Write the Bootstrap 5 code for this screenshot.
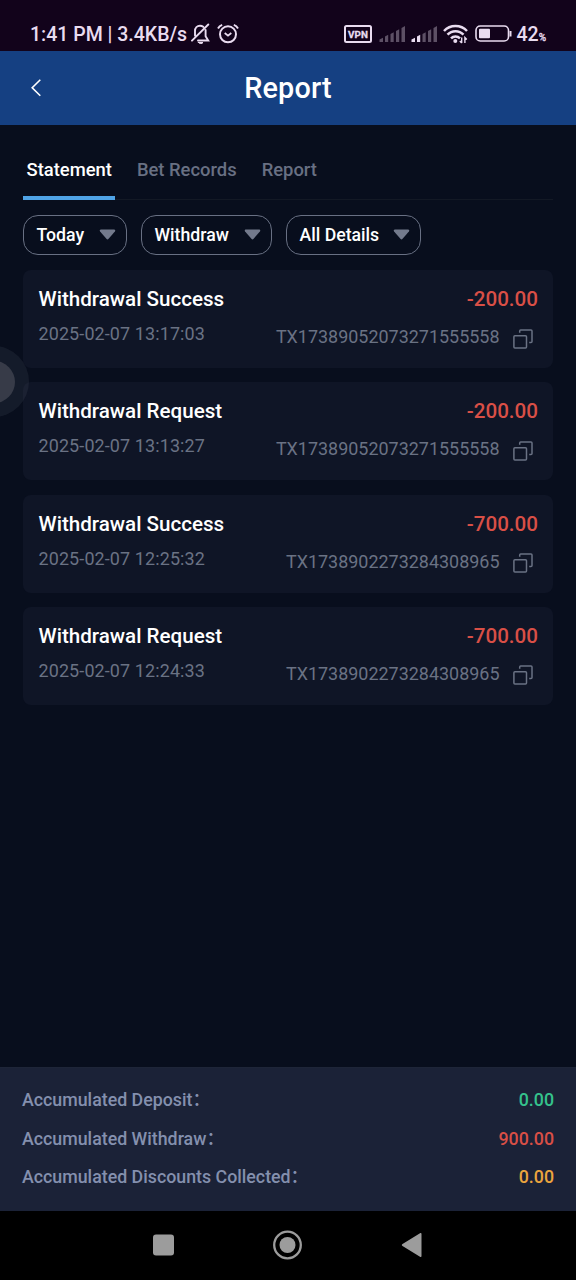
<!DOCTYPE html>
<html lang="en">
<head>
<meta charset="utf-8">
<meta name="viewport" content="width=device-width, initial-scale=1">
<title>Report</title>
<link href="https://cdn.jsdelivr.net/npm/bootstrap@5.3.0/dist/css/bootstrap.min.css" rel="stylesheet">
<style>
  body { font-family: Roboto, "Noto Sans CJK SC", sans-serif; background: #080e1d; color: #fff; font-weight: 500; height: 1280px; overflow: hidden; }
  svg { display: block; flex: none; }
  .status-bar { height: 51px; background: #12031b; color: #e9dcf0; padding: 17px 30px 0 30px; font-size: 19.5px; line-height: 35px; }
  .status-bar svg { margin-top: 6px; }
  .app-header { height: 74px; background: #154082; padding-left: 28px; }
  .app-title { font-size: 28.8px; font-weight: 500; line-height: 75px; inset: 0; letter-spacing: .2px; }
  .page-tabs { margin: 0 23px; height: 75px; border-bottom: 1px solid #131925; gap: 18px; }
  .page-tabs .nav-link { color: #687083; font-size: 18.4px; line-height: 28px; padding: 31px 3.5px 0; height: 75px; }
  .page-tabs .nav-link.active { color: #fff; border-bottom: 4px solid #4fa3e6; }
  .filters { padding: 15px 23px 0; gap: 14px; }
  .filter-btn { height: 40px; border: 1px solid #687083; border-radius: 15px; color: #fff; font-size: 17.7px; font-weight: 500; line-height: 26px; padding: 0 10px 1px 12.500px; }
  .filter-btn:hover { color: #fff; border-color: #687083; }
  .records { padding: 15px 23px 0; gap: 14.3px; }
  .record { height: 98px; background: #0f1526; border-radius: 8px; padding: 14px 15px 0 15.500px; }
  .record-title { font-size: 20.6px; line-height: 30px; }
  .amount { font-size: 20.6px; color: #d94f46; }
  .meta { font-size: 17.95px; line-height: 26px; color: #6a7284; font-weight: 400; }
  .date { padding-top: 7px; letter-spacing: .12px; }
  .tx { padding: 10px 5px 0 0; }
  .copy { margin: 4.500px 0 0 13.500px; }
  .totals { height: 144px; background: #1b2237; padding: 13px 22px 0; font-size: 17.8px; line-height: 38.5px; color: #8490ae; border-top: 1px solid #1e2538; }
  .android-nav { height: 69px; background: #000; padding-bottom: 1px; }
  .float-handle { left: -42px; top: 346px; width: 71px; height: 71px; border-radius: 50%; background: rgba(110,115,128,.13); }
  .float-handle span { width: 42px; height: 42px; border-radius: 50%; background: #373b48; }
</style>
</head>
<body class="d-flex flex-column position-relative">

<svg width="0" height="0" class="position-absolute">
  <symbol id="copy" viewBox="0 0 20 20"><g fill="none" stroke="#6a7284" stroke-width="1.500" stroke-linejoin="round"><rect x=".9" y="6.7" width="12.6" height="12.3" rx="1"/><path d="M6.7 3.8V2a1 1 0 0 1 1-1H18a1 1 0 0 1 1 1v10.5a1 1 0 0 1-1 1h-1.800"/></g></symbol>
  <symbol id="caret" viewBox="0 0 17 11"><path d="M2 .5h13c1.200 0 1.600 1 .9 1.900l-6.300 7.400c-.7.800-1.500.8-2.200 0L1.100 2.400C.4 1.500.8.5 2 .5z" fill="#737a8c"/></symbol>
</svg>

<div class="status-bar d-flex flex-shrink-0">
  <span class="text-nowrap">1:41 PM | 3.4KB/s</span>
  <svg width="20" height="22" viewBox="0 0 20 22" style="margin-left:4px" fill="none" stroke="#e9dcf0" stroke-width="1.900" stroke-linecap="round">
    <path d="M4 12.500V8c0-3 2.200-5.300 5-5.300 1.200 0 2.300.4 3.200 1.100M14.600 7v6.300l2.600 4.200H7M1 17.700 17.300 1.500"/><path d="M7.500 19.500h4.500c-.7 1.400-3.800 1.400-4.500 0z" fill="#e9dcf0" stroke-width="1"/>
  </svg>
  <svg width="22" height="22" viewBox="0 0 22 22" style="margin-left:6px" fill="none" stroke="#e9dcf0" stroke-width="2">
    <circle cx="11" cy="11.300" r="8"/><path d="m7.700 10 3.300 2.600 3.300-2.600" stroke-width="1.800"/><path d="M1 5.500C1.900 3.700 3.400 2.400 5.200 1.800M21 5.500c-.9-1.800-2.400-3.100-4.200-3.700" stroke-width="1.900"/>
  </svg>
  <div class="d-flex ms-auto">
    <svg width="28" height="19" viewBox="0 0 28 19" style="margin-top:8px"><rect x="1" y="1" width="26" height="16" rx="1.500" fill="none" stroke="#e9dcf0" stroke-width="2"/><text x="14" y="12.500" text-anchor="middle" font-size="9.800" font-weight="700" fill="#e9dcf0" stroke="#e9dcf0" stroke-width=".3" textLength="20">VPN</text></svg>
    <svg width="27" height="18" viewBox="0 0 27 18" style="margin-left:7px;margin-top:8px" fill="#5d5065"><path d="M.5 17v-2.500L4 12.800V17zM6 17v-5.500l3.200-1.700V17zM11.500 17V9l3.200-1.700V17zM17 17V6l3.200-1.700V17zM22.500 17V3L26 1v16z"/></svg>
    <svg width="27" height="18" viewBox="0 0 27 18" style="margin-left:5px;margin-top:8px" fill="#5d5065"><path d="M.5 17v-2.500L4 12.800V17zM6 17v-5.500l3.200-1.700V17z" fill="#e9dcf0"/><path d="M11.500 17V9l3.200-1.700V17zM17 17V6l3.200-1.700V17zM22.500 17V3L26 1v16z"/></svg>
    <svg width="25" height="20" viewBox="0 0 25 20" style="margin-left:5px;margin-top:7px" fill="none" stroke="#e9dcf0" stroke-width="2.500"><path d="M1 7C7.200.4 17.800.4 24 7M4.500 10.700c4.400-4.700 11.600-4.700 16 0M8 14.300c2.500-2.500 6.500-2.500 9 0"/><circle cx="12.300" cy="17" r="2" fill="#e9dcf0" stroke="none"/><path d="M18.700 13.500V19M16.800 17l1.900 2M21.900 19v-5.500l1.900 2" stroke-width="1.400"/></svg>
    <svg width="37" height="18" viewBox="0 0 37 18" style="margin-left:7px;margin-top:8px"><rect x="1" y="1" width="32.500" height="15" rx="4.300" fill="none" stroke="#e9dcf0" stroke-width="1.600"/><rect x="4" y="3.700" width="11" height="9.600" rx="1" fill="#e9dcf0"/><path d="M35.500 6v5.500" stroke="#e9dcf0" stroke-width="2"/></svg>
    <span style="margin-left:4px">42<span style="font-size:10px;-webkit-text-stroke:.3px #e9dcf0">%</span></span>
  </div>
</div>

<header class="app-header position-relative d-flex align-items-center flex-shrink-0">
  <svg width="16" height="18" viewBox="0 0 16 18" fill="none" stroke="#fff" stroke-width="1.600"><path d="M12.300 .8 4.200 8.800l8.100 8"/></svg>
  <h1 class="app-title position-absolute text-center m-0">Report</h1>
</header>

<main class="flex-grow-1">
  <nav class="page-tabs nav flex-nowrap">
    <a class="nav-link active" href="#">Statement</a>
    <a class="nav-link" href="#">Bet Records</a>
    <a class="nav-link" href="#">Report</a>
  </nav>

  <div class="filters d-flex">
    <button class="filter-btn btn d-flex align-items-center justify-content-between" style="width:104px">Today <svg width="17" height="11"><use href="#caret"/></svg></button>
    <button class="filter-btn btn d-flex align-items-center justify-content-between" style="width:131px">Withdraw <svg width="17" height="11"><use href="#caret"/></svg></button>
    <button class="filter-btn btn d-flex align-items-center justify-content-between" style="width:135px">All Details <svg width="17" height="11"><use href="#caret"/></svg></button>
  </div>

  <div class="records d-flex flex-column">
    <article class="record">
      <div class="record-title d-flex justify-content-between"><span>Withdrawal Success</span><span class="amount">-200.00</span></div>
      <div class="meta d-flex justify-content-between"><span class="date">2025-02-07 13:17:03</span><span class="d-flex tx">TX17389052073271555558<svg class="copy" width="20" height="20"><use href="#copy"/></svg></span></div>
    </article>
    <article class="record">
      <div class="record-title d-flex justify-content-between"><span>Withdrawal Request</span><span class="amount">-200.00</span></div>
      <div class="meta d-flex justify-content-between"><span class="date">2025-02-07 13:13:27</span><span class="d-flex tx">TX17389052073271555558<svg class="copy" width="20" height="20"><use href="#copy"/></svg></span></div>
    </article>
    <article class="record">
      <div class="record-title d-flex justify-content-between"><span>Withdrawal Success</span><span class="amount">-700.00</span></div>
      <div class="meta d-flex justify-content-between"><span class="date">2025-02-07 12:25:32</span><span class="d-flex tx">TX1738902273284308965<svg class="copy" width="20" height="20"><use href="#copy"/></svg></span></div>
    </article>
    <article class="record">
      <div class="record-title d-flex justify-content-between"><span>Withdrawal Request</span><span class="amount">-700.00</span></div>
      <div class="meta d-flex justify-content-between"><span class="date">2025-02-07 12:24:33</span><span class="d-flex tx">TX1738902273284308965<svg class="copy" width="20" height="20"><use href="#copy"/></svg></span></div>
    </article>
  </div>
</main>

<footer class="totals flex-shrink-0">
  <div class="d-flex justify-content-between"><span>Accumulated Deposit：</span><span style="color:#35c28c">0.00</span></div>
  <div class="d-flex justify-content-between"><span>Accumulated Withdraw：</span><span style="color:#d94f46">900.00</span></div>
  <div class="d-flex justify-content-between"><span>Accumulated Discounts Collected：</span><span style="color:#eba53e">0.00</span></div>
</footer>

<div class="android-nav d-flex align-items-center justify-content-center flex-shrink-0">
  <svg width="270" height="30" viewBox="0 0 270 30" fill="#9c9c9c"><rect x="0" y="4.500" width="21" height="21" rx="3"/><circle cx="134.500" cy="15" r="13.300" fill="none" stroke="#9c9c9c" stroke-width="2.300"/><circle cx="134.500" cy="15" r="8"/><path d="M249.500 14 267 3.200c.8-.5 1.500 0 1.500.8v22c0 .8-.7 1.300-1.500.8L249.500 16c-.9-.6-.9-1.400 0-2z"/></svg>
</div>

<div class="float-handle position-absolute d-flex align-items-center justify-content-center"><span></span></div>
<script src="https://cdn.jsdelivr.net/npm/bootstrap@5.3.0/dist/js/bootstrap.bundle.min.js"></script>
</body>
</html>
